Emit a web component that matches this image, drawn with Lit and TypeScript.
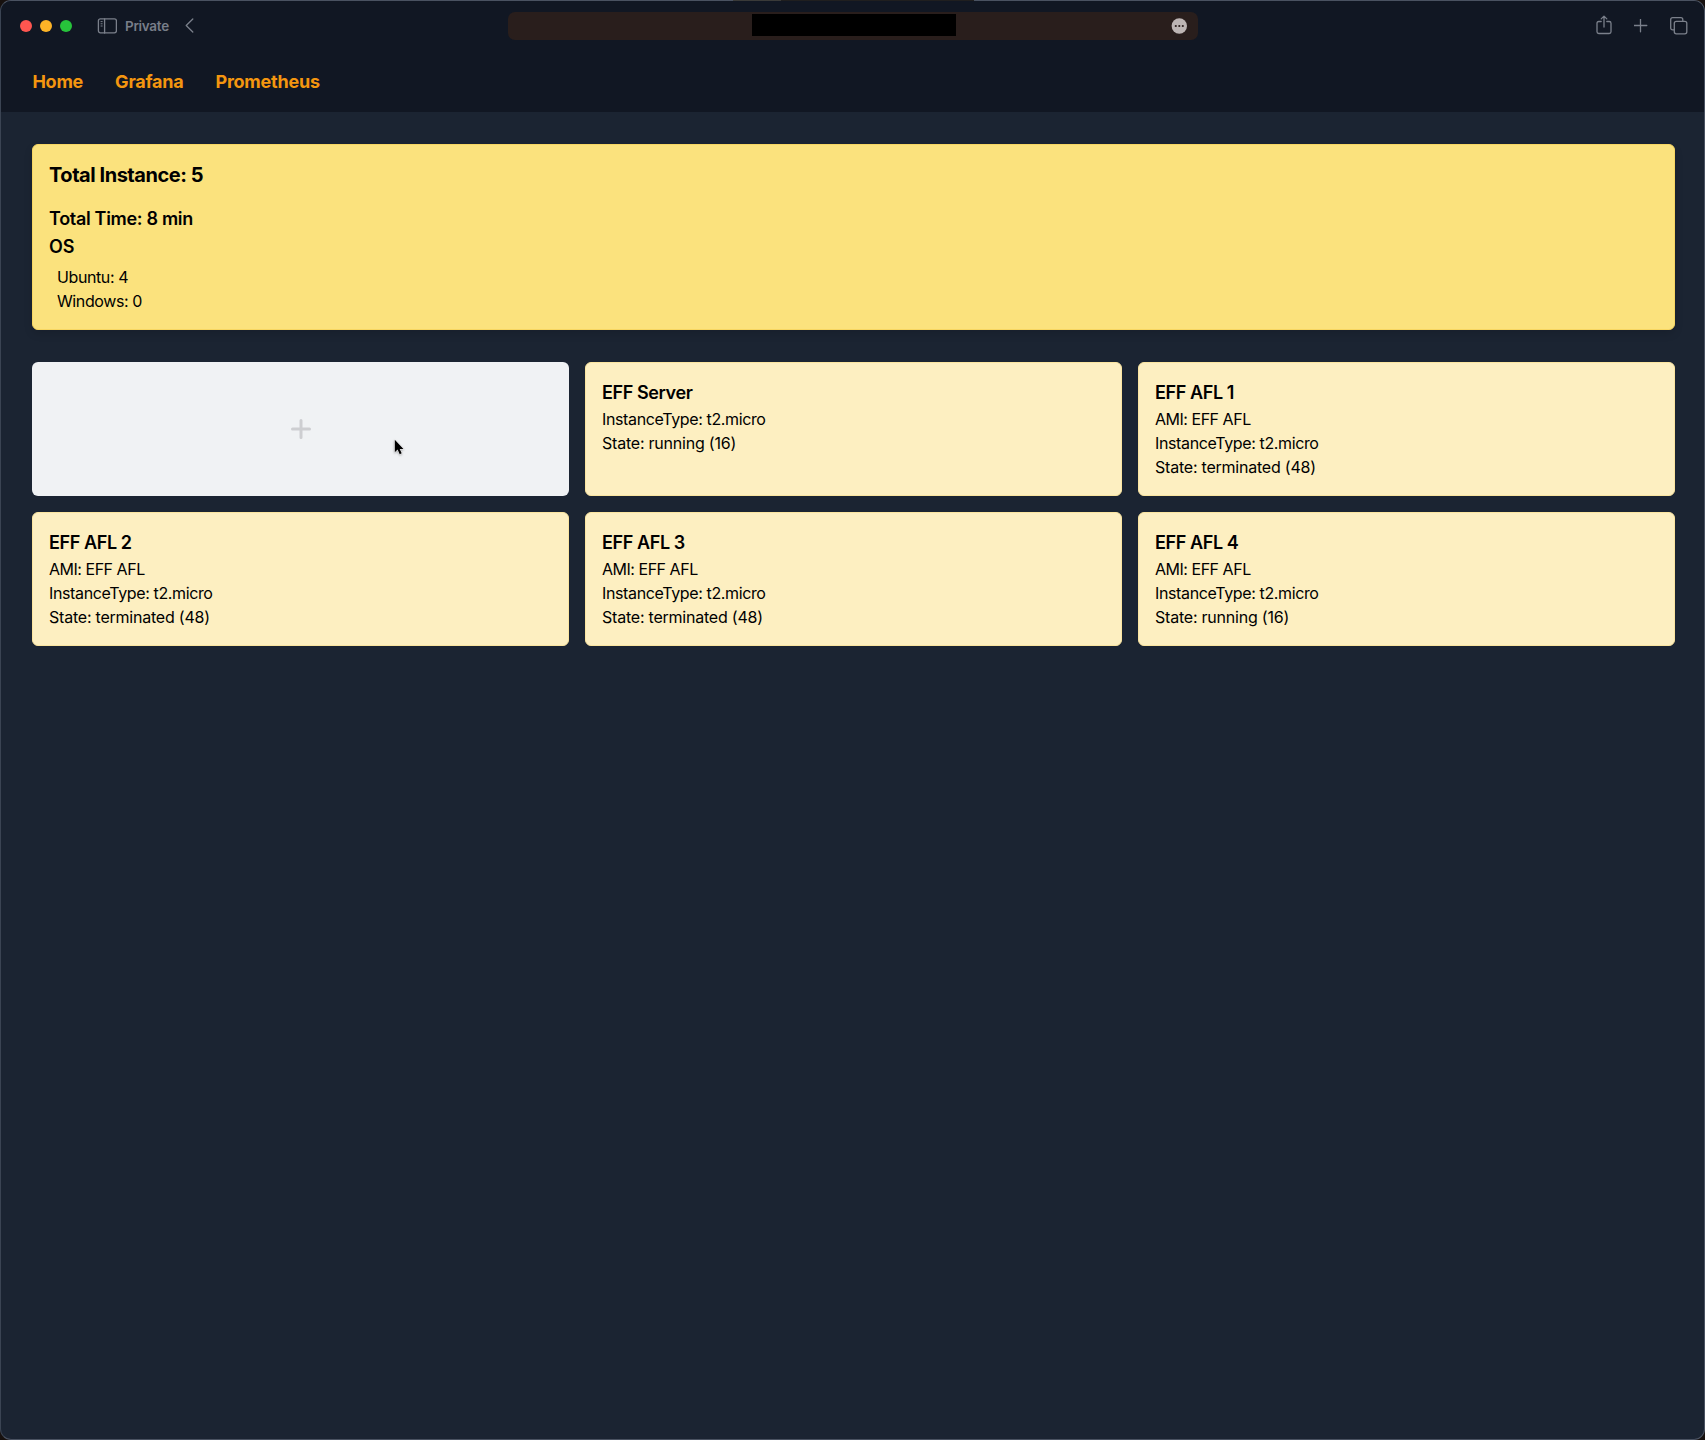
import { LitElement, html, css } from "lit";
import { customElement, property } from "lit/decorators.js";
import { classMap } from "lit/directives/class-map.js";

interface Instance {
  name: string;
  ami?: string;
  type: string;
  state: string;
}

const INSTANCES: Instance[] = [
  { name: "EFF Server", type: "t2.micro", state: "running (16)" },
  { name: "EFF AFL 1", ami: "EFF AFL", type: "t2.micro", state: "terminated (48)" },
  { name: "EFF AFL 2", ami: "EFF AFL", type: "t2.micro", state: "terminated (48)" },
  { name: "EFF AFL 3", ami: "EFF AFL", type: "t2.micro", state: "terminated (48)" },
  { name: "EFF AFL 4", ami: "EFF AFL", type: "t2.micro", state: "running (16)" },
];

@customElement("browser-toolbar")
class BrowserToolbar extends LitElement {
  static styles = css`
    :host { display: block; }
    .bar {
      box-sizing: border-box;
      height: 51px;
      display: grid;
      grid-template-columns: 1fr 690px 1fr;
      align-items: center;
      padding: 0 16px 1px 17px;
    }
    .left { display: flex; align-items: center; }
    .dots { display: flex; gap: 8px; margin-left: 2px; }
    .dot { width: 12px; height: 12px; border-radius: 50%; }
    .red { background: #fe5650; }
    .amber { background: #fdb427; }
    .green { background: #27c33b; }
    .panel { margin-left: 25px; }
    .private {
      margin-left: 8px;
      font-size: 13.5px;
      font-weight: 600;
      line-height: 16px;
      letter-spacing: -0.3px;
      color: #787d89;
    }
    .back { margin-left: 16.5px; margin-bottom: 1px; }
    .address {
      box-sizing: border-box;
      height: 28px;
      border-radius: 7px;
      background: #291e1c;
      display: flex;
      align-items: center;
      justify-content: flex-end;
      padding-right: 11px;
    }
    .redacted { width: 204px; height: 22px; background: #000; margin: 0 215px 2px 0; }
    .more { margin-bottom: 1px; }
    .right { display: flex; align-items: center; justify-content: flex-end; gap: 22px; }
    svg { display: block; flex: none; }
    .stroke { fill: none; stroke: #7b808b; stroke-width: 1.3; stroke-linecap: round; stroke-linejoin: round; }
    .panel .marks { stroke-width: 1; }
    .share { margin-bottom: 2px; }
    .add { margin-bottom: 1px; }
    .tabs { margin-bottom: 1px; }
  `;

  render() {
    return html`
      <div class="bar">
        <div class="left">
          <div class="dots">
            <span class="dot red"></span><span class="dot amber"></span><span class="dot green"></span>
          </div>
          <svg class="panel stroke" width="20" height="16" viewBox="0 0 20 16">
            <rect x="1.4" y="0.8" width="18" height="14" rx="2"></rect>
            <path d="M7.6 1v14"></path>
            <path class="marks" d="M4 3.6h1.2M4 5.8h1.2M4 8h1.2"></path>
          </svg>
          <span class="private">Private</span>
          <svg class="back stroke" width="9" height="15" viewBox="0 0 9 15">
            <path d="M7.800 1L1.200 7.500l6.600 6.500"></path>
          </svg>
        </div>
        <div class="address">
          <div class="redacted"></div>
          <svg class="more" width="16" height="16" viewBox="0 0 16 16">
            <circle cx="8.3" cy="8" r="7.7" fill="#bdb5b4"></circle>
            <g fill="#291e1c">
              <circle cx="4.8" cy="8" r="1.1"></circle>
              <circle cx="8.3" cy="8" r="1.1"></circle>
              <circle cx="11.8" cy="8" r="1.1"></circle>
            </g>
          </svg>
        </div>
        <div class="right">
          <svg class="share stroke" width="16" height="20" viewBox="0 0 16 20">
            <path d="M5.200 6.500H2.800Q1 6.500 1 8.300V16.700Q1 18.500 2.800 18.500H13.200Q15 18.500 15 16.700V8.300Q15 6.500 13.200 6.500H10.800M8 12V1.300M5.200 3.900L8 1.100l2.800 2.800"></path>
          </svg>
          <svg class="add stroke" width="14" height="14" viewBox="0 0 14 14">
            <path d="M6.500 0.200v12.600M0.200 6.500h12.600"></path>
          </svg>
          <svg class="tabs stroke" width="18" height="18" viewBox="0.4 0.400 18 18">
            <rect x="4.700" y="4.700" width="12.500" height="12.500" rx="2"></rect>
            <path d="M4.500 13.200H3.100Q1.100 13.200 1.100 11.300V3.100Q1.100 1.100 3.100 1.100H11.300Q13.200 1.100 13.200 3.100V4.500"></path>
          </svg>
        </div>
      </div>
    `;
  }
}

@customElement("instance-card")
class InstanceCard extends LitElement {
  @property({ attribute: false }) instance!: Instance;

  static styles = css`
    :host { display: block; }
    .card {
      box-sizing: border-box;
      height: 100%;
      padding: 16px;
      border: 1px solid #fbe5a0;
      border-radius: 6px;
      background: #fdefc1;
      color: #000;
    }
    .title {
      margin: 0;
      font-size: 18px;
      line-height: 28px;
      font-weight: 600;
      letter-spacing: -0.4px;
    }
    .line { font-size: 16px; line-height: 24px; }
    .ami { letter-spacing: -0.48px; }
    .type { letter-spacing: -0.37px; }
    .state { letter-spacing: -0.22px; }
  `;

  private line(kind: string, label: string, value?: string) {
    return value
      ? html`<div class=${classMap({ line: true, [kind]: true })}>${label}: ${value}</div>`
      : "";
  }

  render() {
    const { name, ami, type, state } = this.instance;
    return html`
      <div class="card">
        <h2 class="title">${name}</h2>
        ${this.line("ami", "AMI", ami)}
        ${this.line("type", "InstanceType", type)}
        ${this.line("state", "State", state)}
      </div>
    `;
  }
}

@customElement("app-root")
class AppRoot extends LitElement {
  static styles = css`
    :host {
      display: block;
      height: 1440px;
      background: #17110f;
      font-family: Inter, "Liberation Sans", sans-serif;
    }
    .window {
      position: relative;
      box-sizing: border-box;
      height: 1440px;
      border: 1px solid #4a5261;
      border-left-color: #3b4453;
      border-radius: 11px;
      background: #1b2432;
    }
    .edge { position: absolute; left: 732px; top: -1px; width: 241px; height: 1px; background: linear-gradient(90deg, #3a3a38 48px, #201f1f 48px); }
    .head { background: #111723; height: 111px; border-radius: 10px 10px 0 0; }
    .nav { display: flex; gap: 32px; padding: 16px 31.4px; }
    .link {
      font-size: 18px;
      line-height: 28px;
      font-weight: 700;
      letter-spacing: -0.23px;
      color: #f4960f;
    }
    .main { padding: 32px 29px 32px 31px; }
    .summary {
      padding: 16px;
      border: 1px solid #f7d662;
      border-radius: 6px;
      background: #fbe27d;
      color: #000;
      box-shadow: 0 4px 8px rgba(0, 0, 0, 0.12);
    }
    .total {
      margin: 0 0 16px;
      font-size: 20px;
      line-height: 28px;
      font-weight: 700;
      letter-spacing: -0.46px;
    }
    .sub {
      margin: 0;
      font-size: 18px;
      line-height: 28px;
      font-weight: 600;
    }
    .time { letter-spacing: -0.31px; }
    .systems {
      margin: 4px 0 0;
      padding: 0 8px;
      list-style: none;
      font-size: 16px;
      line-height: 24px;
      letter-spacing: -0.4px;
    }
    .grid { display: grid; grid-template-columns: repeat(3, 1fr); gap: 16px; margin-top: 32px; }
    .new {
      border-radius: 6px;
      background: #f0f2f4;
      display: flex;
      align-items: center;
      justify-content: center;
    }
    .cursor { position: absolute; left: 391.6px; top: 437px; filter: drop-shadow(0 1px 1px rgba(0, 0, 0, 0.3)); }
  `;

  render() {
    return html`
      <div class="window">
        <div class="edge"></div>
        <div class="head">
          <browser-toolbar></browser-toolbar>
          <nav class="nav">
            <a class="link">Home</a><a class="link">Grafana</a><a class="link">Prometheus</a>
          </nav>
        </div>
        <main class="main">
          <section class="summary">
            <h1 class="total">Total Instance: 5</h1>
            <h2 class="sub time">Total Time: 8 min</h2>
            <h2 class="sub">OS</h2>
            <ul class="systems">
              <li>Ubuntu: 4</li>
              <li>Windows: 0</li>
            </ul>
          </section>
          <section class="grid">
            <div class="new">
              <svg width="20" height="20" viewBox="0 0 20 20">
                <path d="M10 1.500v17M1.500 10h17" stroke="#cdced1" stroke-width="3" stroke-linecap="round"></path>
              </svg>
            </div>
            ${INSTANCES.map((i) => html`<instance-card .instance=${i}></instance-card>`)}
          </section>
        </main>
        <svg class="cursor" width="14" height="20" viewBox="0 0 14 20">
          <path d="M1.800 1.800V14.200L4.600 11.600L6.700 16.200L8.700 15.300L6.700 10.900H10.500Z" fill="#000" stroke="#fff" stroke-width="0.8" paint-order="stroke"></path>
        </svg>
      </div>
    `;
  }
}
